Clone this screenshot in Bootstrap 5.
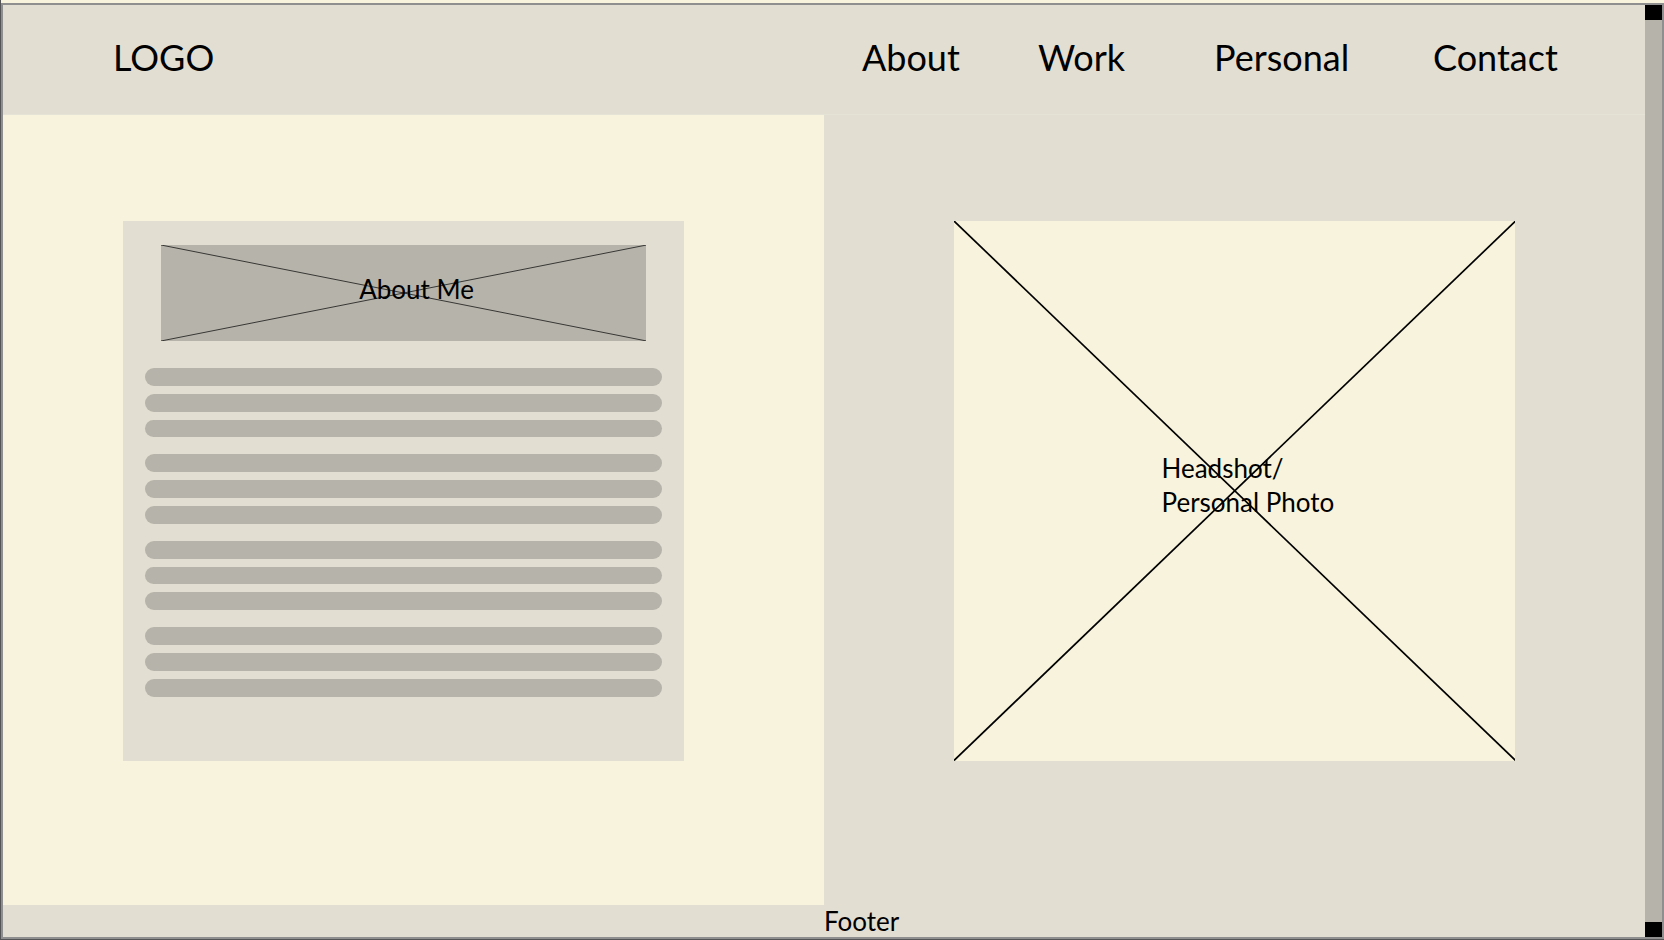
<!DOCTYPE html>
<html lang="en">
<head>
<meta charset="utf-8">
<meta name="viewport" content="width=device-width, initial-scale=1">
<title>About Me</title>
<link href="https://cdn.jsdelivr.net/npm/bootstrap@5.3.0/dist/css/bootstrap.min.css" rel="stylesheet">
<style>
  :root { --cream: #f8f3dc; --stone: #e2ded2; --gray: #b6b3aa; --frame: #8f8f8f; --edge: #545456; }
  body { font-family: Lato, "Open Sans", sans-serif; font-size: 26px; line-height: 34px; color: #000;
         background: var(--cream); border-left: 1px solid var(--edge); border-bottom: 1px solid var(--edge); padding-top: 3px; }
  .page-frame { border: 2px solid var(--frame); background: var(--stone); }
  .site-header { height: 110px; border-bottom: 1px solid #e5e2d6; font-size: 36px; line-height: 48px; padding-bottom: 6px; }
  .site-header a { color: inherit; text-decoration: none; }
  .brand { padding-left: 110px; }
  .menu { display: grid; grid-template-columns: 176fr 176fr 219fr 212fr; padding-left: 38px; }
  .pane { padding-top: 106px; padding-bottom: 24px; }
  .pane-about { background: var(--cream); }
  .panel { width: 68.4%; aspect-ratio: 561 / 539; }
  .panel-about { margin-left: 14.6%; background: var(--stone); padding: 24px 22px 64px; }
  .panel-photo { background: var(--cream); }
  .banner { height: 96px; margin: 0 16px 27px; background: var(--gray); padding: 0 0 8px 26px; }
  .banner h1 { font-size: inherit; line-height: inherit; }
  .cross { position: absolute; inset: 0; width: 100%; height: 100%; stroke: #000; }
  .cross line { vector-effect: non-scaling-stroke; }
  .paragraphs { gap: 17px; }
  .lines { gap: 8px; }
  .lines span { background: var(--gray); }
  .photo-label { padding-left: 37%; padding-bottom: 12px; }
  .site-footer { height: 32px; line-height: 32px; }
  .scroll-track { width: 17px; background: var(--gray); }
  .scroll-end { height: 15px; background: #000; }
</style>
</head>
<body class="d-flex flex-column min-vh-100">
<div class="page-frame d-flex flex-fill">
  <div class="d-flex flex-column flex-fill">
    <header class="site-header row g-0 align-items-center">
      <div class="col-6"><a class="brand" href="#">LOGO</a></div>
      <nav class="col-6 menu">
        <a href="#">About</a>
        <a href="#">Work</a>
        <a href="#">Personal</a>
        <a href="#">Contact</a>
      </nav>
    </header>
    <main class="row g-0 flex-fill">
      <section class="col-6 pane pane-about">
        <div class="panel panel-about d-flex flex-column">
          <div class="banner position-relative d-flex align-items-center justify-content-center">
            <svg class="cross" viewBox="0 0 100 100" preserveAspectRatio="none" aria-hidden="true">
              <line x1="0" y1="0" x2="100" y2="100" stroke-width=".7"/><line x1="0" y1="100" x2="100" y2="0" stroke-width=".7"/>
            </svg>
            <h1 class="position-relative m-0 fw-normal">About Me</h1>
          </div>
          <div class="paragraphs d-flex flex-column flex-fill">
            <div class="lines d-flex flex-column flex-fill"><span class="flex-fill rounded-pill"></span><span class="flex-fill rounded-pill"></span><span class="flex-fill rounded-pill"></span></div>
            <div class="lines d-flex flex-column flex-fill"><span class="flex-fill rounded-pill"></span><span class="flex-fill rounded-pill"></span><span class="flex-fill rounded-pill"></span></div>
            <div class="lines d-flex flex-column flex-fill"><span class="flex-fill rounded-pill"></span><span class="flex-fill rounded-pill"></span><span class="flex-fill rounded-pill"></span></div>
            <div class="lines d-flex flex-column flex-fill"><span class="flex-fill rounded-pill"></span><span class="flex-fill rounded-pill"></span><span class="flex-fill rounded-pill"></span></div>
          </div>
        </div>
      </section>
      <section class="col-6 pane">
        <div class="panel panel-photo position-relative mx-auto d-flex align-items-center">
          <svg class="cross" viewBox="0 0 100 100" preserveAspectRatio="none" aria-hidden="true">
            <line x1="0" y1="0" x2="100" y2="100" stroke-width="1.7"/><line x1="0" y1="100" x2="100" y2="0" stroke-width="1.7"/>
          </svg>
          <div class="photo-label position-relative">Headshot/<br>Personal Photo</div>
        </div>
      </section>
    </main>
    <footer class="site-footer row g-0"><div class="col-6 offset-6">Footer</div></footer>
  </div>
  <div class="scroll-track d-flex flex-column justify-content-between flex-shrink-0">
    <div class="scroll-end"></div>
    <div class="scroll-end"></div>
  </div>
</div>
<script src="https://cdn.jsdelivr.net/npm/bootstrap@5.3.0/dist/js/bootstrap.bundle.min.js"></script>
</body>
</html>
